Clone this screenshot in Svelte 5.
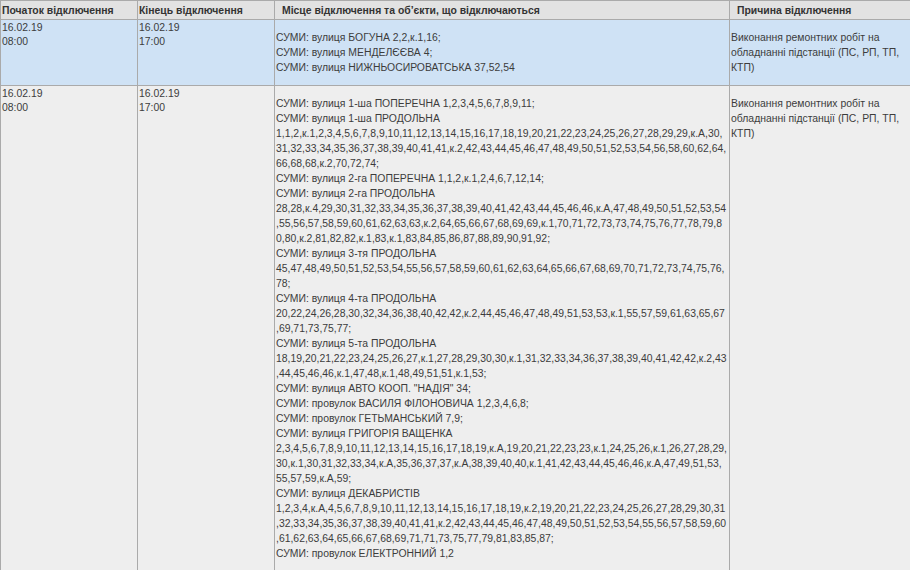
<script lang="ts">
	const rows = [
		{
			cls: 'blue',
			lines: [
				'СУМИ: вулиця БОГУНА 2,2,к.1,16;',
				'СУМИ: вулиця МЕНДЕЛЄЄВА 4;',
				'СУМИ: вулиця НИЖНЬОСИРОВАТСЬКА 37,52,54'
			]
		},
		{
			cls: 'grey',
			lines: [
				'СУМИ: вулиця 1-ша ПОПЕРЕЧНА 1,2,3,4,5,6,7,8,9,11;',
				'СУМИ: вулиця 1-ша ПРОДОЛЬНА',
				'1,1,2,к.1,2,3,4,5,6,7,8,9,10,11,12,13,14,15,16,17,18,19,20,21,22,23,24,25,26,27,28,29,29,к.А,30,',
				'31,32,33,34,35,36,37,38,39,40,41,41,к.2,42,43,44,45,46,47,48,49,50,51,52,53,54,56,58,60,62,64,',
				'66,68,68,к.2,70,72,74;',
				'СУМИ: вулиця 2-га ПОПЕРЕЧНА 1,1,2,к.1,2,4,6,7,12,14;',
				'СУМИ: вулиця 2-га ПРОДОЛЬНА',
				'28,28,к.4,29,30,31,32,33,34,35,36,37,38,39,40,41,42,43,44,45,46,46,к.А,47,48,49,50,51,52,53,54',
				',55,56,57,58,59,60,61,62,63,63,к.2,64,65,66,67,68,69,69,к.1,70,71,72,73,73,74,75,76,77,78,79,8',
				'0,80,к.2,81,82,82,к.1,83,к.1,83,84,85,86,87,88,89,90,91,92;',
				'СУМИ: вулиця 3-тя ПРОДОЛЬНА',
				'45,47,48,49,50,51,52,53,54,55,56,57,58,59,60,61,62,63,64,65,66,67,68,69,70,71,72,73,74,75,76,',
				'78;',
				'СУМИ: вулиця 4-та ПРОДОЛЬНА',
				'20,22,24,26,28,30,32,34,36,38,40,42,42,к.2,44,45,46,47,48,49,51,53,53,к.1,55,57,59,61,63,65,67',
				',69,71,73,75,77;',
				'СУМИ: вулиця 5-та ПРОДОЛЬНА',
				'18,19,20,21,22,23,24,25,26,27,к.1,27,28,29,30,30,к.1,31,32,33,34,36,37,38,39,40,41,42,42,к.2,43',
				',44,45,46,46,к.1,47,48,к.1,48,49,51,51,к.1,53;',
				'СУМИ: вулиця АВТО КООП. "НАДІЯ" 34;',
				'СУМИ: провулок ВАСИЛЯ ФІЛОНОВИЧА 1,2,3,4,6,8;',
				'СУМИ: провулок ГЕТЬМАНСЬКИЙ 7,9;',
				'СУМИ: вулиця ГРИГОРІЯ ВАЩЕНКА',
				'2,3,4,5,6,7,8,9,10,11,12,13,14,15,16,17,18,19,к.А,19,20,21,22,23,23,к.1,24,25,26,к.1,26,27,28,29,',
				'30,к.1,30,31,32,33,34,к.А,35,36,37,37,к.А,38,39,40,40,к.1,41,42,43,44,45,46,46,к.А,47,49,51,53,',
				'55,57,59,к.А,59;',
				'СУМИ: вулиця ДЕКАБРИСТІВ',
				'1,2,3,4,к.А,4,5,6,7,8,9,10,11,12,13,14,15,16,17,18,19,к.2,19,20,21,22,23,24,25,26,27,28,29,30,31',
				',32,33,34,35,36,37,38,39,40,41,41,к.2,42,43,44,45,46,47,48,49,50,51,52,53,54,55,56,57,58,59,60',
				',61,62,63,64,65,66,67,68,69,71,71,73,75,77,79,81,83,85,87;',
				'СУМИ: провулок ЕЛЕКТРОННИЙ 1,2'
			]
		}
	]
</script>

<table>
	<colgroup>
		<col class="c1" />
		<col class="c2" />
		<col class="c3" />
		<col class="c4" />
	</colgroup>
	<thead>
		<tr>
			<th>Початок відключення</th>
			<th>Кінець відключення</th>
			<th class="pad">Місце відключення та об’єкти, що відключаються</th>
			<th class="pad">Причина відключення</th>
		</tr>
	</thead>
	<tbody>
		{#each rows as row}
			<tr class={row.cls}>
				<td class="top">16.02.19<br />08:00</td>
				<td class="top">16.02.19<br />17:00</td>
				<td class="mid">
					{#each row.lines as line}
						<div>{line}</div>
					{/each}
				</td>
				<td class="mid">Виконання ремонтних робіт на обладнанні підстанції (ПС, РП, ТП, КТП)</td>
			</tr>
		{/each}
	</tbody>
</table>

<style>
	:global(body) {
		margin: 0;
		background: #fff;
		overflow: hidden;
	}

	table {
		border-collapse: collapse;
		table-layout: fixed;
		width: 910px;
		font-family: "Liberation Sans", Arial, sans-serif;
		font-size: 10.42px;
		line-height: 15px;
		color: #3c3c3c;
	}

	.c1 {
		width: 137px;
	}
	.c2 {
		width: 137px;
	}
	.c3 {
		width: 455px;
	}
	.c4 {
		width: 181px;
	}

	th,
	td {
		border: 1px solid #aaa;
		padding: 1px;
		white-space: nowrap;
	}

	th {
		height: 18px;
		padding: 0 1px;
		background: #e2e2e2;
		font-weight: bold;
		text-align: left;
		color: #333;
	}

	th.pad {
		padding-left: 7px;
	}

	td {
		vertical-align: top;
	}

	td.top {
		line-height: 14px;
	}

	td.mid {
		padding-top: 10px;
		padding-bottom: 10px;
	}

	td:last-child {
		white-space: normal;
	}

	.blue td {
		background: #cfe2f5;
	}

	.grey td {
		background: #eee;
	}
</style>
